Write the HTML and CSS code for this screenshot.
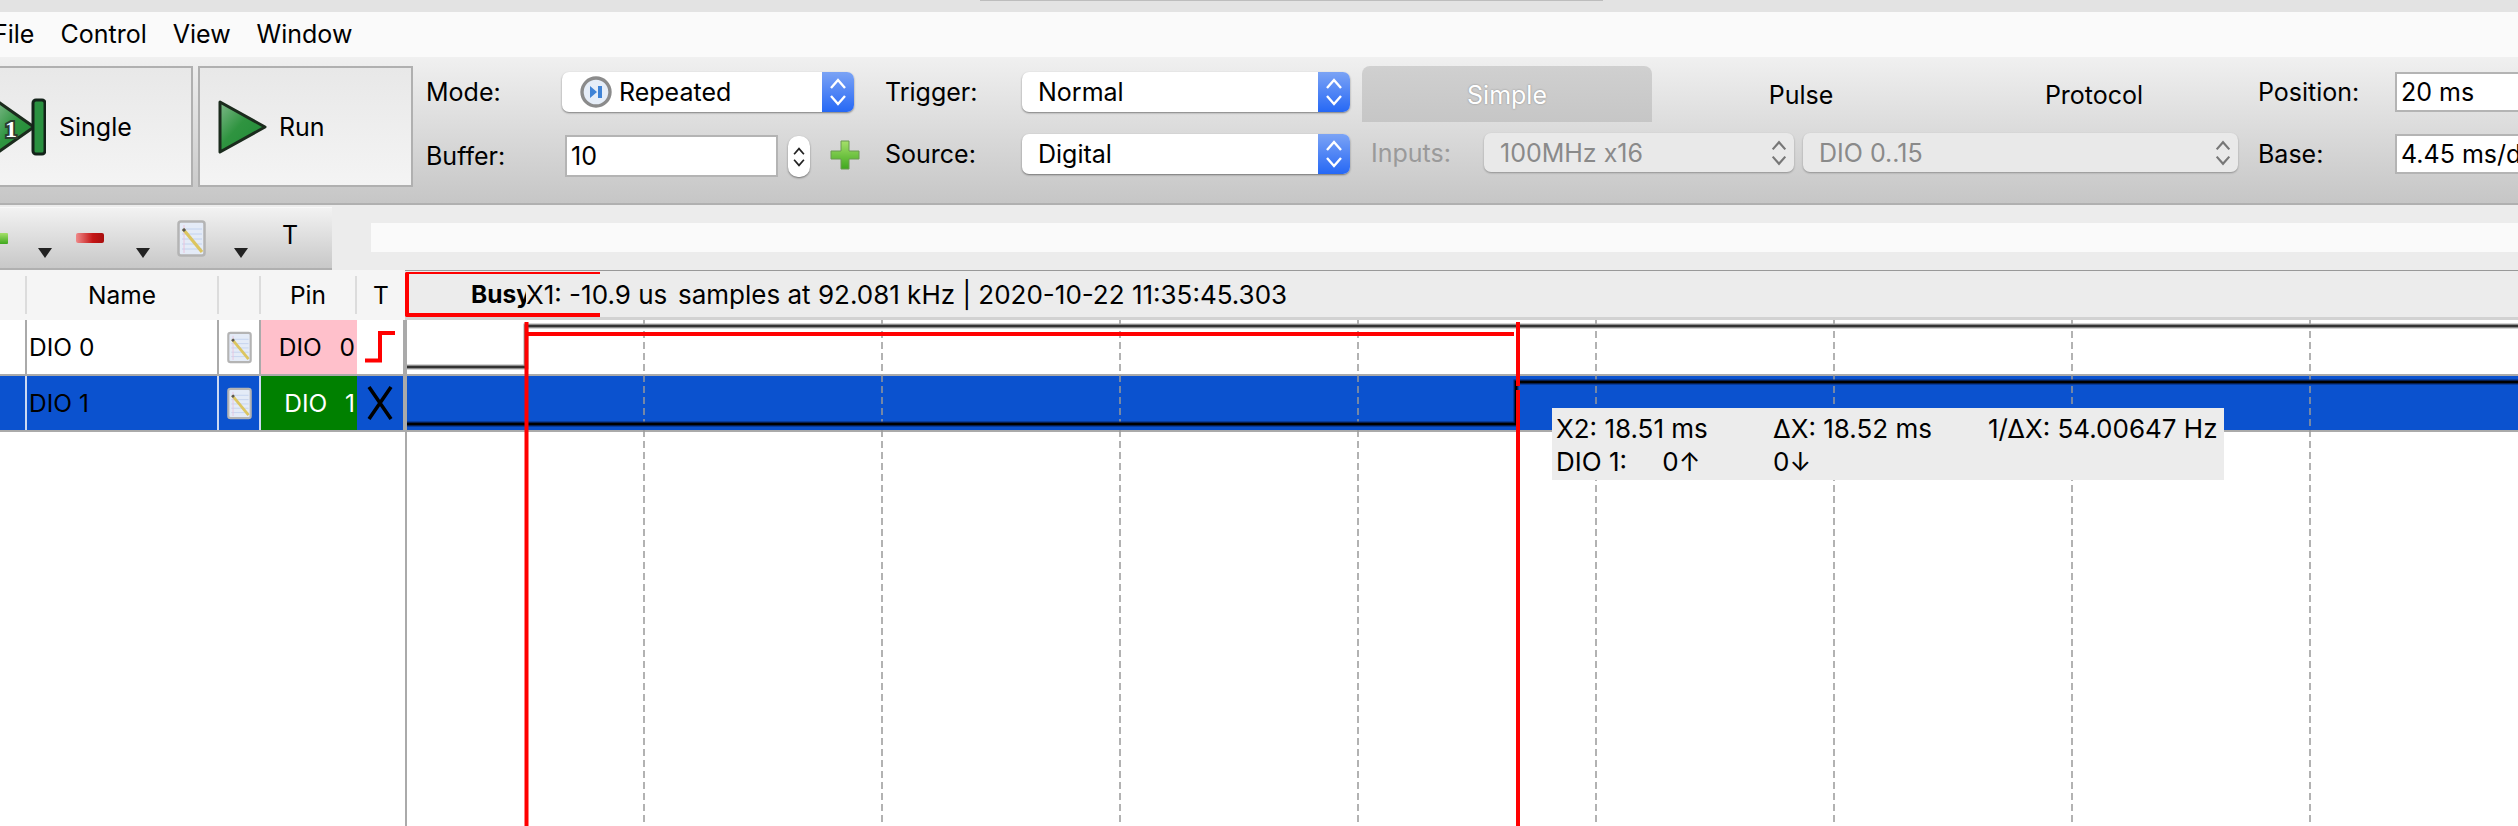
FILE: index.html
```html
<!DOCTYPE html>
<html lang="en">
<head>
<meta charset="utf-8">
<title>Logic analyzer</title>
<link rel="stylesheet" href="styles.css">
</head>
<body>
<svg class="defs" width="0" height="0" aria-hidden="true">
  <defs>
    <linearGradient id="gGreen" x1="0" y1="0" x2="1" y2="1"><stop offset="0" stop-color="#7fb98a"/><stop offset=".45" stop-color="#2f9440"/><stop offset="1" stop-color="#1f8a36"/></linearGradient>
    <linearGradient id="gPlus" x1="0" y1="0" x2="0" y2="1"><stop offset="0" stop-color="#a5e06a"/><stop offset="1" stop-color="#3fa81e"/></linearGradient>
    <linearGradient id="gMinus" x1="0" y1="0" x2="1" y2="0"><stop offset="0" stop-color="#ef8a8a"/><stop offset=".6" stop-color="#c41616"/><stop offset="1" stop-color="#a80e0e"/></linearGradient>
    <symbol id="note" viewBox="0 0 29 37">
      <rect x="1.5" y="1.5" width="26" height="34" rx="2.5" fill="#e4ebf7" stroke="#b4b4b4" stroke-width="2.5"/>
      <path d="M5 9H25M5 14H25M5 19H25M5 24H25M5 29H25" stroke="#c2d2ee" stroke-width="1"/>
      <path d="M7 5V33" stroke="#eac4dc" stroke-width="1"/>
      <path d="M6 9L25 32" stroke="#dcc560" stroke-width="3.2"/>
      <path d="M6 9L8 11" stroke="#555" stroke-width="3"/>
    </symbol>
    <symbol id="updown" viewBox="0 0 20 32">
      <path d="M3 12L10 4L17 12M3 20L10 28L17 20" fill="none" stroke="currentColor" stroke-width="2.4"/>
    </symbol>
  </defs>
</svg>
<div class="app">
  <div class="top-strip"><div class="notch"></div></div>
  <nav class="menu"><span class="menu-file">File</span><span>Control</span><span>View</span><span>Window</span></nav>

  <section class="toolbar">
    <div class="btns">
      <button class="big-btn single">
        <svg width="46" height="58" viewBox="0 0 46 58"><path d="M-3 3L34 29L-3 55Z" fill="url(#gGreen)" stroke="#1b2b1d" stroke-width="3"/><rect x="33" y="2" width="12" height="54" rx="3" fill="#2a9140" stroke="#14231a" stroke-width="3"/><text x="11" y="39" class="badge">1</text></svg>
        <span>Single</span>
      </button>
      <button class="big-btn run">
        <svg width="49" height="54" viewBox="0 0 49 54"><path d="M2 2L47 27L2 52Z" fill="url(#gGreen)" stroke="#1b2b1d" stroke-width="3" stroke-linejoin="round"/></svg>
        <span>Run</span>
      </button>
    </div>

    <div class="form form-mode">
      <label class="lbl">Mode:</label>
      <div class="combo"><svg class="mode-ic" width="32" height="32" viewBox="0 0 32 32"><circle cx="16" cy="16" r="14" fill="#e5edf8" stroke="#8b8b8b" stroke-width="3.4"/><path d="M10 10L17 16L10 22ZM18 10H22V22H18Z" fill="#3f83d6"/></svg><span class="combo-text mode-text">Repeated</span><span class="blue"><svg width="20" height="32"><use href="#updown"/></svg></span></div>
      <label class="lbl">Buffer:</label>
      <div class="buffer"><div class="input num">10</div><div class="spin"><svg width="14" height="30"><use href="#updown"/></svg></div><svg class="plus" width="30" height="30" viewBox="0 0 30 30"><path d="M11 1H19V11H29V19H19V29H11V19H1V11H11Z" fill="url(#gPlus)" stroke="#6a9a50" stroke-width="1"/></svg></div>
    </div>

    <div class="form form-trig">
      <label class="lbl">Trigger:</label>
      <div class="combo"><span class="combo-text">Normal</span><span class="blue"><svg width="20" height="32"><use href="#updown"/></svg></span></div>
      <label class="lbl">Source:</label>
      <div class="combo"><span class="combo-text">Digital</span><span class="blue"><svg width="20" height="32"><use href="#updown"/></svg></span></div>
    </div>

    <div class="tabs-group">
      <div class="tabs"><div class="tab active">Simple</div><div class="tab">Pulse</div><div class="tab">Protocol</div></div>
      <div class="tab-form">
        <label class="lbl off inputs-lbl">Inputs:</label>
        <div class="combo off w1"><span class="combo-text">100MHz x16</span><svg width="18" height="30"><use href="#updown"/></svg></div>
        <div class="combo off w2"><span class="combo-text">DIO 0..15</span><svg width="18" height="30"><use href="#updown"/></svg></div>
      </div>
    </div>

    <div class="form form-pos">
      <label class="lbl">Position:</label>
      <div class="input">20 ms</div>
      <label class="lbl">Base:</label>
      <div class="input">4.45 ms/div</div>
    </div>
  </section>

  <section class="tools">
    <div class="tool-bar">
      <svg class="ic-plus" width="8" height="11" viewBox="0 0 8 11"><rect x="-6" y="0" width="14" height="11" rx="1" fill="url(#gPlus)"/></svg>
      <span class="tri"></span>
      <svg class="ic-minus" width="28" height="10" viewBox="0 0 28 10"><rect width="28" height="10" rx="2" fill="url(#gMinus)"/></svg>
      <span class="tri"></span>
      <svg class="ic-note" width="29" height="37"><use href="#note"/></svg>
      <span class="tri"></span>
      <span class="tool-t">T</span>
    </div>
    <div class="tool-field"></div>
  </section>

  <section class="table">
    <div class="thead">
      <div class="h c0"></div>
      <div class="h c1">Name</div>
      <div class="h c2"></div>
      <div class="h c3">Pin</div>
      <div class="h c4">T</div>
      <div class="h-bus"><b>Busy</b><div class="bus-box"></div></div>
      <div class="h-x1">X1: -10.9 us</div>
      <div class="h-info">samples at 92.081 kHz | 2020-10-22 11:35:45.303</div>
    </div>
    <div class="row">
      <div class="c c0"></div>
      <div class="c c1 name">DIO 0</div>
      <div class="c c2"><svg width="25" height="33"><use href="#note"/></svg></div>
      <div class="c c3 pin pink">DIO  0</div>
      <div class="c c4"><svg width="32" height="32" viewBox="0 0 32 32"><path d="M1 29.500H16V2H31" fill="none" stroke="#f00" stroke-width="4"/></svg></div>
    </div>
    <div class="row sel">
      <div class="c c0"></div>
      <div class="c c1 name">DIO 1</div>
      <div class="c c2"><svg width="25" height="33"><use href="#note"/></svg></div>
      <div class="c c3 pin green">DIO  1</div>
      <div class="c c4"><svg width="26" height="34" viewBox="0 0 26 34"><path d="M2 1L24 33M24 1L2 33" stroke="#000" stroke-width="3.600"/></svg></div>
    </div>

    <svg class="plot" width="2113" height="506" viewBox="405 320 2113 506">
      <g class="grid">
        <path d="M644 320V826M882 320V826M1120 320V826M1358 320V826M1596 320V826M1834 320V826M2072 320V826M2310 320V826"/>
      </g>
      <path class="sig-halo" d="M405 367H526V326H2518"/>
      <path class="sig" d="M405 367H526V326H2518"/>
      <path class="sig-halo-sel" d="M405 424H1516V382H2518"/>
      <path class="sig-sel" d="M405 424H1516V382H2518"/>
      <path class="rail" d="M406 320V826"/>
      <path class="cursor" d="M526.500 322V826M1518 322V386M1518 390V826M526 334H1514"/>
    </svg>

    <div class="readout">
      <div class="ro-line"><span class="ro-a">X2: 18.51 ms</span><span class="ro-b">ΔX: 18.52 ms</span><span>1/ΔX: 54.00647 Hz</span></div>
      <div class="ro-line"><span class="ro-a">DIO 1: <span class="ro-count">0↑</span></span><span class="ro-b">0↓</span></div>
    </div>
  </section>
</div>
</body>
</html>
```

FILE: styles.css
```css
* { box-sizing: border-box; }
html, body { margin: 0; padding: 0; background: #fff; }
body { font-family: Inter, "Liberation Sans", sans-serif; font-size: 25px; color: #000; }
.defs { position: absolute; }
.app { width: 2518px; height: 826px; overflow: hidden; display: flex; flex-direction: column; }

.top-strip { height: 12px; background: #e3e3e3; flex: none; }
.notch { margin-left: 980px; width: 623px; height: 1px; background: #bdbdbd; }

.menu { height: 45px; flex: none; background: #fafafa; display: flex; align-items: center; gap: 26px; padding-bottom: 2px; }
.menu-file { margin-left: -7px; }

.toolbar { height: 148px; flex: none; display: flex; align-items: flex-start; background: linear-gradient(#f0f0f0, #c6c6c6); border-bottom: 2px solid #b0b0b0; }
.btns { width: 413px; flex: none; display: flex; gap: 5px; padding-top: 9px; }
.big-btn { height: 121px; display: flex; align-items: center; font: inherit; color: #000; background: linear-gradient(#e8e8e8, #f4f4f4); border: 2px solid #b0b0b0; padding: 0; }
.big-btn.single { width: 193px; gap: 13px; border-left: 0; }
.big-btn.run { width: 215px; padding-left: 18px; gap: 12px; }
.badge { font: bold 24px "Liberation Serif", serif; fill: #fff; stroke: #2b3d2e; stroke-width: 4px; paint-order: stroke; text-anchor: middle; }

.form { flex: none; display: grid; grid-template-rows: 40px 40px; row-gap: 22px; padding-top: 15px; align-items: center; }
.form-mode { margin-left: 13px; grid-template-columns: 136px 292px; row-gap: 24px; }
.form-trig { margin-left: 31px; grid-template-columns: 137px 328px; }
.form-pos { margin-left: 20px; grid-template-columns: 137px 200px; }

.combo { height: 40px; display: flex; align-items: center; background: #fff; border-radius: 7px; box-shadow: 0 1px 2px rgba(0,0,0,.45); overflow: hidden; position: relative; }
.combo-text { flex: 1; padding-left: 16px; white-space: nowrap; }
.combo .mode-ic { margin-left: 18px; flex: none; }
.combo .mode-text { padding-left: 7px; }
.blue { width: 32px; height: 100%; flex: none; display: flex; align-items: center; justify-content: center; color: #fff; background: linear-gradient(#7ba3f5, #2668f5); }

.input { height: 40px; background: #fff; border: 2px solid #b4b4b4; padding-left: 4px; display: flex; align-items: center; white-space: nowrap; }
.buffer { display: flex; align-items: flex-start; height: 40px; }
.num { width: 213px; height: 42px; margin-left: 3px; margin-top: -1px; flex: none; }
.spin { width: 22px; height: 41px; margin-left: 10px; flex: none; background: #fff; border-radius: 10px; box-shadow: 0 1px 2px rgba(0,0,0,.45); display: flex; align-items: center; justify-content: center; color: #222; }
.plus { margin-left: 20px; margin-top: 4px; flex: none; }

.tabs-group { width: 876px; flex: none; margin-left: 12px; padding-top: 9px; }
.tabs { display: flex; height: 56px; }
.tab { display: flex; align-items: center; justify-content: center; padding-top: 1px; }
.tab:nth-child(1) { width: 290px; }
.tab:nth-child(2) { width: 298px; }
.tab:nth-child(3) { width: 288px; }
.tab.active { background: linear-gradient(#d0d0d0, #c6c6c6); border-radius: 8px 8px 0 0; color: #fff; text-shadow: 0 0 2px rgba(0,0,0,.35); }
.tab-form { display: flex; align-items: center; margin-top: 11px; }
.lbl.off { color: #9a9a9a; }
.inputs-lbl { width: 122px; padding-left: 9px; flex: none; }
.combo.off { background: #e9e9e9; color: #8a8a8a; height: 39px; box-shadow: 0 1px 2px rgba(0,0,0,.3); padding-right: 6px; }
.combo.off svg { color: #777; flex: none; }
.w1 { width: 310px; }
.w2 { width: 435px; margin-left: 9px; }

.tools { height: 66px; flex: none; display: flex; background: #ececec; border-bottom: 1px solid #999; }
.tool-bar { width: 332px; height: 63px; margin-top: 2px; flex: none; display: flex; align-items: flex-start; background: linear-gradient(#f2f2f2, #c8c8c8); border-top: 1px solid #f8f8f8; border-bottom: 2px solid #b0b0b0; position: relative; }
.tri { width: 0; height: 0; border-left: 7px solid transparent; border-right: 7px solid transparent; border-top: 10px solid #222; margin-top: 40px; flex: none; }
.ic-plus { margin-top: 25px; flex: none; margin-right: 30px; }
.ic-minus { margin: 25px 32px 0 24px; flex: none; }
.ic-note { margin: 12px 28px 0 27px; flex: none; }
.tool-t { margin-left: 34px; margin-top: 12px; line-height: 30px; }
.tool-field { margin: 18px 0 0 39px; flex: 1; height: 29px; background: #fafafa; }

.table { flex: 1; position: relative; min-height: 0; font-size: 24.500px; }
.thead { height: 49px; display: flex; align-items: center; background: #ececec; border-bottom: 3px solid #d2d2d2; white-space: pre; }
.h { height: 38px; margin-top: 2px; flex: none; display: flex; align-items: center; justify-content: center; background: #f5f5f5; border-right: 2px solid #dcdcdc; box-shadow: 0 -6px 0 #f5f5f5, 0 6px 0 #f5f5f5; }
.c0 { width: 27px; }
.c1 { width: 192px; }
.c2 { width: 42px; }
.c3 { width: 96px; }
.c4 { width: 48px; }
.h.c4 { border-right: 0; }
.h-bus { width: 121px; height: 46px; flex: none; overflow: hidden; padding-left: 66px; line-height: 46px; margin-top: -1px; }
.bus-box { position: absolute; left: 405px; top: 1px; width: 195px; height: 45px; border: 3px solid #f00; border-width: 2px 0 4px 4px; pointer-events: none; border-radius: 2px 0 0 2px; }
.h-x1 { width: 152px; flex: none; font-size: 26px; }
.h-info { font-size: 26px; }

.row { height: 56px; display: flex; border-bottom: 2px solid #aaa; }
.c { height: 54px; flex: none; display: flex; align-items: center; justify-content: center; border-right: 2px solid #aaa; }
.name { justify-content: flex-start; padding-left: 2px; }
.pin { justify-content: flex-end; padding-right: 2px; white-space: pre; border-right: 0; word-spacing: 2px; }
.c.c3 { width: 96px; }
.pink { background: #ffc0cb; }
.green { background: #008000; color: #fff; }
.row.sel { background: #0b52cf; }
.row.sel .c { border-right-color: #cdd9f2; }
.row.sel .c4 { border-right-color: #aaa; }

.plot { position: absolute; left: 405px; top: 49px; display: block; pointer-events: none; }
.plot path { fill: none; }
.grid path { stroke: #999; stroke-width: 1.500; stroke-dasharray: 7 4; }
.sig-halo { stroke: #aaa; stroke-width: 5; }
.sig { stroke: #333; stroke-width: 2.500; }
.sig-halo-sel { stroke: #07296e; stroke-width: 5; }
.sig-sel { stroke: #000; stroke-width: 2.500; }
.rail { stroke: #aaa; stroke-width: 2; }
.cursor { stroke: #f00; stroke-width: 4; }

.readout { position: absolute; left: 1552px; top: 137px; width: 672px; height: 72px; background: #ececec; padding: 4px 0 0 4px; font-size: 26px; line-height: 33px; }
.ro-line { display: flex; white-space: nowrap; }
.ro-a { width: 217px; flex: none; }
.ro-b { width: 215px; flex: none; }
.ro-count { margin-left: 28px; }
```
